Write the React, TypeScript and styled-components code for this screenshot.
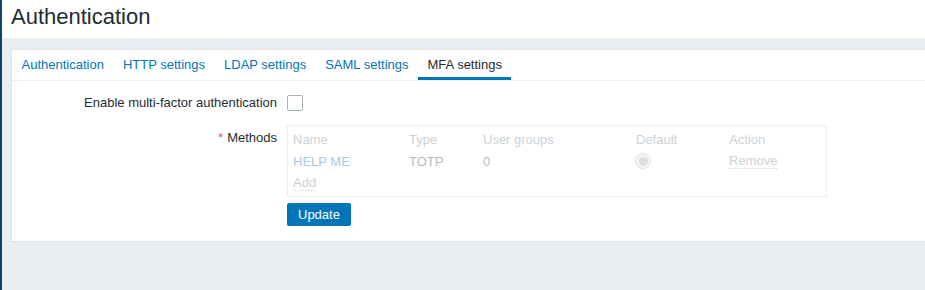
import styled, { createGlobalStyle } from "styled-components";

const GlobalStyle = createGlobalStyle`
  html, body {
    margin: 0;
    padding: 0;
  }
  body {
    background: #ebeef0;
    font-family: "Liberation Sans", Arial, sans-serif;
    font-size: 13px;
    color: #1f2c33;
  }
`;

const Page = styled.div`
  display: flex;
  min-height: 100vh;
`;

const SideEdge = styled.div`
  width: 2px;
  flex: none;
  background: #0a466a;
`;

const Main = styled.div`
  flex: 1;
  min-width: 0;
  display: flex;
  flex-direction: column;
`;

const Header = styled.header`
  height: 38px;
  padding-left: 9px;
  background: #ffffff;
  display: flex;
  align-items: flex-start;
`;

const Title = styled.h1`
  margin: 0;
  font-size: 22px;
  font-weight: normal;
  line-height: 34px;
  color: #1f2c33;
`;

const Content = styled.main`
  padding: 11px 0 0 9px;
`;

const Panel = styled.section`
  background: #ffffff;
  border: 1px solid #dfe4e7;
  border-right: none;
`;

const TabBar = styled.nav`
  display: flex;
  border-bottom: 1px solid #ebeef0;
`;

const Tab = styled.a<{ $active?: boolean }>`
  display: block;
  height: 30px;
  line-height: 30px;
  padding: 0 9.5px;
  color: ${(p) => (p.$active ? "#1f2c33" : "#0275b8")};
  text-decoration: none;
  cursor: pointer;
  box-shadow: ${(p) => (p.$active ? "inset 0 -3px 0 #0275b8" : "none")};
`;

const Form = styled.form`
  padding: 13px 0 15px;
  display: flex;
  flex-direction: column;
`;

const FieldRow = styled.div<{ $space?: number }>`
  display: grid;
  grid-template-columns: 265px 1fr;
  column-gap: 10px;
  margin-top: ${(p) => p.$space ?? 0}px;
`;

const Label = styled.label<{ $top?: number }>`
  text-align: right;
  line-height: 16px;
  padding-top: ${(p) => p.$top ?? 0}px;
`;

const Required = styled.span`
  color: #e45959;
  margin-right: 4px;
`;

const Checkbox = styled.span`
  display: block;
  width: 14px;
  height: 14px;
  margin-top: 1px;
  border: 1px solid #a6b3ba;
  border-radius: 2px;
  background: #ffffff;
`;

const MethodsBox = styled.div`
  width: 528px;
  padding: 2px 5px;
  border: 1px solid #ebeef0;
`;

const MethodsRow = styled.div`
  display: grid;
  grid-template-columns: 116px 74px 153px 93px 1fr;
  align-items: center;
  height: 22px;
`;

const HeadCell = styled.span`
  color: #ccd2d6;
`;

const Cell = styled.span<{ $link?: boolean }>`
  color: ${(p) => (p.$link ? "#a3cbe7" : "#b5babd")};
`;

const DottedLink = styled.span`
  justify-self: start;
  color: #ccd2d6;
  line-height: 14px;
  border-bottom: 1px dotted #d4d9dc;
`;

const Radio = styled.span`
  display: flex;
  align-items: center;
  justify-content: center;
  width: 14px;
  height: 14px;
  margin-left: -1px;
  border: 1px solid #dde1e4;
  border-radius: 50%;
  background: #f4f5f6;

  &::after {
    content: "";
    width: 9px;
    height: 9px;
    border-radius: 50%;
    background: #dcdfe1;
  }
`;

const Button = styled.button`
  justify-self: start;
  height: 23px;
  padding: 0 11px;
  border: none;
  border-radius: 2px;
  background: #0275b8;
  color: #ffffff;
  font-family: inherit;
  font-size: 13px;
  cursor: pointer;
`;

const tabs = ["Authentication", "HTTP settings", "LDAP settings", "SAML settings", "MFA settings"];

export default function App() {
  return (
    <>
      <GlobalStyle />
      <Page>
        <SideEdge />
        <Main>
          <Header>
            <Title>Authentication</Title>
          </Header>
          <Content>
            <Panel>
              <TabBar>
                {tabs.map((t) => (
                  <Tab key={t} $active={t === "MFA settings"}>
                    {t}
                  </Tab>
                ))}
              </TabBar>
              <Form onSubmit={(e) => e.preventDefault()}>
                <FieldRow>
                  <Label $top={1}>Enable multi-factor authentication</Label>
                  <Checkbox />
                </FieldRow>
                <FieldRow $space={14}>
                  <Label $top={5}>
                    <Required>*</Required>Methods
                  </Label>
                  <MethodsBox>
                    <MethodsRow>
                      <HeadCell>Name</HeadCell>
                      <HeadCell>Type</HeadCell>
                      <HeadCell>User groups</HeadCell>
                      <HeadCell>Default</HeadCell>
                      <HeadCell>Action</HeadCell>
                    </MethodsRow>
                    <MethodsRow>
                      <Cell $link>HELP ME</Cell>
                      <Cell>TOTP</Cell>
                      <Cell>0</Cell>
                      <Radio />
                      <DottedLink>Remove</DottedLink>
                    </MethodsRow>
                    <MethodsRow>
                      <DottedLink>Add</DottedLink>
                    </MethodsRow>
                  </MethodsBox>
                </FieldRow>
                <FieldRow $space={6}>
                  <span />
                  <Button type="submit">Update</Button>
                </FieldRow>
              </Form>
            </Panel>
          </Content>
        </Main>
      </Page>
    </>
  );
}
